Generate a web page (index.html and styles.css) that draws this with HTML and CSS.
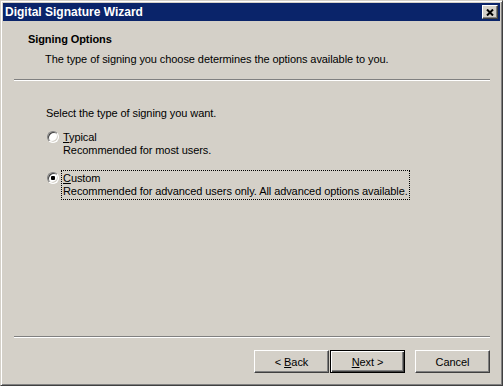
FILE: index.html
```html
<!DOCTYPE html>
<html lang="en">
<head>
    <meta charset="UTF-8">
    <title>Digital Signature Wizard</title>
    <link rel="stylesheet" href="styles.css">
</head>
<body>
    <div class="window">
        <div class="titlebar">
            <span class="title">Digital Signature Wizard</span>
            <button class="close" aria-label="Close">
                <svg width="8" height="7" viewBox="0 0 8 7">
                    <path d="M1 0.5 L7 6.5 M7 0.5 L1 6.5" stroke="#000" stroke-width="2" fill="none"/>
                </svg>
            </button>
        </div>

        <div class="header">
            <div class="header-title">Signing Options</div>
            <div class="header-desc">The type of signing you choose determines the options available to you.</div>
        </div>
        <div class="rule"></div>

        <div class="body">
            <p class="prompt">Select the type of signing you want.</p>

            <div class="option">
                <span class="radio"></span>
                <div class="label">
                    <div><u>T</u>ypical</div>
                    <div>Recommended for most users.</div>
                </div>
            </div>

            <div class="option">
                <span class="radio checked"></span>
                <div class="label focused">
                    <div><u>C</u>ustom</div>
                    <div>Recommended for advanced users only. All advanced options available.</div>
                </div>
            </div>
        </div>

        <div class="rule"></div>
        <div class="footer">
            <button class="btn">&lt; <u>B</u>ack</button>
            <button class="btn default"><u>N</u>ext &gt;</button>
            <button class="btn cancel">Cancel</button>
        </div>
    </div>
</body>
</html>
```

FILE: styles.css
```css
html, body {
    margin: 0;
    padding: 0;
    background-color: #d4d0c8;
}

body {
    font-family: "Liberation Sans", Arial, sans-serif;
    font-size: 11px;
    line-height: 13px;
    letter-spacing: -0.08px;
    color: #000;
}

.window {
    width: 503px;
    height: 386px;
    box-sizing: border-box;
    display: flex;
    flex-direction: column;
    padding: 2px;
    background-color: #d4d0c8;
    border: 1px solid;
    border-color: #d4d0c8 #404040 #404040 #d4d0c8;
    box-shadow: inset 1px 1px #fff, inset -1px -1px #808080;
}

/* title bar */
.titlebar {
    height: 18px;
    display: flex;
    align-items: center;
    justify-content: space-between;
    background-color: #0a246a;
    color: #fff;
}

.title {
    padding-left: 2px;
    font-weight: bold;
    font-size: 12px;
    letter-spacing: 0;
}

.close {
    width: 16px;
    height: 14px;
    margin-right: 2px;
    padding: 0;
    display: flex;
    align-items: center;
    justify-content: center;
    background-color: #d4d0c8;
    border: 1px solid;
    border-color: #fff #404040 #404040 #fff;
    box-shadow: inset -1px -1px #808080;
}

/* header */
.header {
    padding: 12px 0 13px;
}

.header-title {
    margin-left: 25px;
    font-weight: bold;
}

.header-desc {
    margin-top: 7px;
    margin-left: 42px;
}

.rule {
    height: 1px;
    margin: 0 10px 0 11px;
    background-color: #808080;
    border-bottom: 1px solid #fff;
}

/* options */
.body {
    flex: 1;
    padding: 26px 0 0 43px;
}

.prompt {
    margin: 0 0 9px;
}

.option {
    display: flex;
    align-items: flex-start;
    margin-bottom: 11px;
}

.radio {
    width: 12px;
    height: 12px;
    box-sizing: border-box;
    margin: 2px 2px 0 1px;
    border-radius: 50%;
    border: 1px solid;
    border-color: #808080 #fff #fff #808080;
    background-color: #fff;
    box-shadow: inset 1px 1px #404040, inset -1px -1px #d4d0c8;
    display: flex;
    align-items: center;
    justify-content: center;
}

.radio.checked::after {
    content: "";
    width: 4px;
    height: 4px;
    border-radius: 1px;
    background-color: #000;
}

.label {
    padding: 1px;
    border: 1px dotted transparent;
}

.label.focused {
    border-color: #000;
}

/* buttons */
.footer {
    display: flex;
    justify-content: flex-end;
    padding: 12px 10px 10px;
}

.btn {
    width: 75px;
    height: 23px;
    padding: 0;
    box-sizing: border-box;
    font-family: inherit;
    font-size: 11px;
    letter-spacing: inherit;
    color: #000;
    background-color: #d4d0c8;
    border: 1px solid;
    border-color: #fff #404040 #404040 #fff;
    box-shadow: inset -1px -1px #808080;
}

.btn.default {
    border: 1px solid #000;
    box-shadow: inset 1px 1px #fff, inset -1px -1px #404040, inset -2px -2px #808080;
}

.btn.cancel {
    margin-left: 10px;
}

.btn + .btn.default {
    margin-left: 1px;
}
```
